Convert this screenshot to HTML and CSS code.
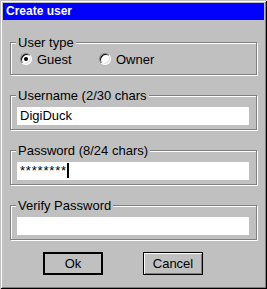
FILE: index.html
```html
<!DOCTYPE html>
<html lang="en">
<head>
    <meta charset="UTF-8">
    <title>Create user</title>
    <link rel="stylesheet" href="styles.css">
</head>
<body>
    <div class="window">
        <div class="titlebar">Create user</div>
        <div class="content">
            <fieldset class="group group-type">
                <legend>User type</legend>
                <div class="radios">
                    <label class="radio"><span class="radio-box checked"></span>Guest</label>
                    <label class="radio"><span class="radio-box"></span>Owner</label>
                </div>
            </fieldset>
            <fieldset class="group">
                <legend>Username (2/30 chars</legend>
                <div class="field">DigiDuck</div>
            </fieldset>
            <fieldset class="group">
                <legend>Password (8/24 chars)</legend>
                <div class="field"><span class="stars">********</span><span class="caret"></span></div>
            </fieldset>
            <fieldset class="group">
                <legend>Verify Password</legend>
                <div class="field"></div>
            </fieldset>
            <div class="buttons">
                <button class="btn default">Ok</button>
                <button class="btn">Cancel</button>
            </div>
        </div>
    </div>
</body>
</html>
```

FILE: styles.css
```css
body {
    margin: 0;
    font-family: "Liberation Sans", Arial, sans-serif;
    font-size: 13px;
    color: #000;
    background-color: #c0c0c0;
}
.window {
    width: 267px;
    height: 289px;
    box-sizing: border-box;
    padding: 3px;
    background-color: #c0c0c0;
    box-shadow: inset 1px 1px #c0c0c0, inset -1px -1px #000, inset 2px 2px #fff, inset -2px -2px #808080;
}
.titlebar {
    height: 17px;
    line-height: 17px;
    padding-left: 3px;
    background-color: #0000ff;
    color: #fff;
    font-size: 12px;
    font-weight: bold;
}
.content {
    padding: 0 7px;
}
.group {
    margin: 13px 0 0;
    padding: 0 0 4px;
    min-width: 0;
    border: 1px solid #808080;
    box-shadow: inset 1px 1px #fff, 1px 1px #fff;
}
.group-type {
    margin-top: 15px;
    padding-bottom: 7px;
}
.group legend {
    margin-left: 5px;
    padding: 0 2px;
    line-height: 15px;
    background-color: #c0c0c0;
}
.radios {
    display: flex;
    align-items: center;
    height: 16px;
    margin-top: 1px;
    padding-left: 9px;
}
.radio {
    display: flex;
    align-items: center;
    gap: 5px;
    width: 79px;
}
.radio-box {
    display: flex;
    align-items: center;
    justify-content: center;
    width: 12px;
    height: 12px;
    box-sizing: border-box;
    border-radius: 50%;
    border: 1px solid;
    border-color: #808080 #fff #fff #808080;
    background-color: #fff;
    box-shadow: inset 1px 1px #000, inset -1px -1px #dfdfdf;
}
.radio-box.checked::after {
    content: "";
    width: 4px;
    height: 4px;
    border-radius: 50%;
    background-color: #000;
}
.field {
    height: 18px;
    line-height: 18px;
    margin: 4px 7px 0 6px;
    padding-left: 3px;
    background-color: #fff;
}
.stars {
    letter-spacing: 0.8px;
}
.caret {
    display: inline-block;
    vertical-align: top;
    width: 2px;
    height: 15px;
    margin-top: 1px;
    background-color: #000;
}
.buttons {
    display: flex;
    gap: 40px;
    margin-top: 12px;
    padding-left: 33px;
}
.btn {
    width: 60px;
    height: 23px;
    padding: 0;
    font-family: "Liberation Sans", Arial, sans-serif;
    font-size: 13px;
    color: #000;
    background-color: #c0c0c0;
    border: 1px solid #000;
    box-shadow: inset 1px 1px #fff, inset -1px -1px #808080;
}
.btn.default {
    border-width: 2px;
    box-shadow: none;
}
```
